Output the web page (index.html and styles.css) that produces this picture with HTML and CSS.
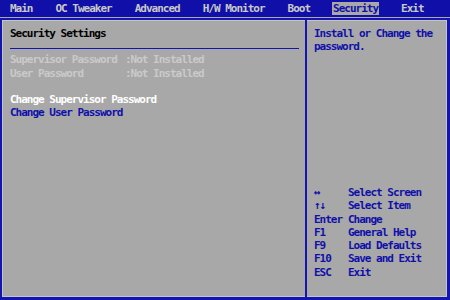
FILE: index.html
```html
<!DOCTYPE html>
<html lang="en">
<head>
    <meta charset="UTF-8">
    <title>BIOS Setup - Security</title>
    <link rel="stylesheet" href="styles.css">
</head>
<body>

    <div class="menu-bar">
        <span class="menu-item">Main</span>
        <span class="menu-item">OC Tweaker</span>
        <span class="menu-item">Advanced</span>
        <span class="menu-item">H/W Monitor</span>
        <span class="menu-item">Boot</span>
        <span class="menu-item active">Security</span>
        <span class="menu-item">Exit</span>
    </div>

    <div class="frame">
        <div class="left-panel">
            <div class="section-title">Security Settings</div>
            <div class="rule"></div>

            <div class="row disabled"><span class="label">Supervisor Password</span>:Not Installed</div>
            <div class="row disabled"><span class="label">User Password</span>:Not Installed</div>
            <div class="row blank"></div>
            <div class="row selected">Change Supervisor Password</div>
            <div class="row option">Change User Password</div>
        </div>

        <div class="right-panel">
            <div class="help-text">Install or Change the<br>password.</div>

            <div class="keys">
                <div class="key-row"><span class="key">&harr;</span>Select Screen</div>
                <div class="key-row"><span class="key">&uarr;&darr;</span>Select Item</div>
                <div class="key-row"><span class="key">Enter</span>Change</div>
                <div class="key-row"><span class="key">F1</span>General Help</div>
                <div class="key-row"><span class="key">F9</span>Load Defaults</div>
                <div class="key-row"><span class="key">F10</span>Save and Exit</div>
                <div class="key-row"><span class="key">ESC</span>Exit</div>
            </div>
        </div>
    </div>

</body>
</html>
```

FILE: styles.css
```css
body {
    margin: 0;
    width: 450px;
    height: 300px;
    overflow: hidden;
    background-color: #a8a8a8;
    font-family: "DejaVu Sans Mono", "Liberation Mono", monospace;
    font-size: 11px;
    font-weight: bold;
    letter-spacing: -1px;
    line-height: 13.3px;
    white-space: nowrap;
}

.menu-bar {
    display: flex;
    gap: 23px;
    height: 17px;
    padding-left: 10px;
    background-color: #1010a8;
    color: #c8c8c8;
    align-items: center;
}

.menu-item {
    line-height: 12px;
    padding-top: 1px;
}

.menu-item.active {
    background-color: #a8a8a8;
    color: #1010a8;
    margin: 0 -1px;
    padding: 1px 1px 0 1px;
}

.frame {
    display: flex;
    margin-top: 1px;
    height: 277px;
    border-style: solid;
    border-color: #1414b0;
    border-width: 2px 3px 3px 2px;
    box-shadow: inset 0 0 0 1px #c4c4c4;
}

.left-panel {
    width: 295px;
    padding: 6px 0 0 8px;
    border-right: 2px solid #1414b0;
}

.section-title {
    color: #000;
    padding-top: 1px;
}

.rule {
    height: 1px;
    width: 289px;
    margin: 8px 0 4px 0;
    background-color: #1414b0;
}

.row {
    height: 13.3px;
}

.label {
    display: inline-block;
    width: 115px;
}

.disabled {
    color: #cacaca;
}

.selected {
    color: #ffffff;
}

.option {
    color: #1010a8;
}

.right-panel {
    flex: 1;
    display: flex;
    flex-direction: column;
    justify-content: space-between;
    padding: 7px 0 18px 7px;
    color: #1010a8;
}

.key {
    display: inline-block;
    width: 34px;
}
```
